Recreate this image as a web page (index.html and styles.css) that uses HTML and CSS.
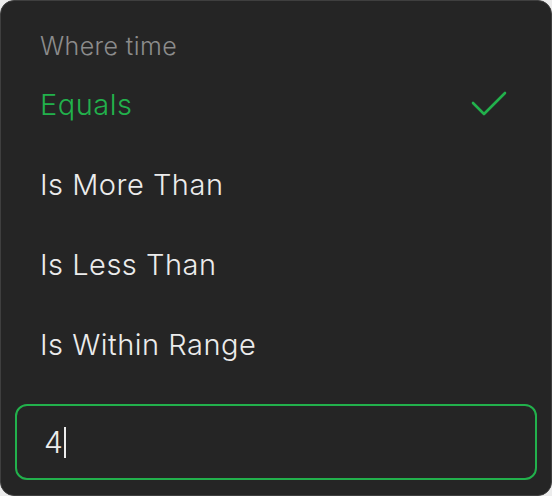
FILE: index.html
```html
<!DOCTYPE html>
<html>
<head>
<meta charset="utf-8">
<link rel="stylesheet" href="styles.css">
</head>
<body>
<div class="card">
  <div class="header">Where time</div>
  <ul class="options">
    <li class="option selected"><span>Equals</span>
      <svg class="check" width="36" height="26" viewBox="0 0 36 26"><path d="M2 12 L13 23 L34 2" fill="none" stroke="#22b14c" stroke-width="2.6" stroke-linecap="round" stroke-linejoin="round"/></svg>
    </li>
    <li class="option"><span>Is More Than</span></li>
    <li class="option"><span>Is Less Than</span></li>
    <li class="option"><span>Is Within Range</span></li>
  </ul>
  <div class="input"><span class="value">4</span><span class="caret"></span></div>
</div>
</body>
</html>
```
FILE: styles.css
```css
html, body { margin: 0; padding: 0; background: #ececec; }
body { width: 552px; height: 496px; font-family: Inter, "Noto Sans", sans-serif; }
.card {
  box-sizing: border-box;
  width: 552px; height: 496px;
  background: #252525;
  border: 1px solid #3f3f3f;
  border-radius: 14px;
  padding: 28px 14px 15px 14px;
  display: flex; flex-direction: column;
}
.header {
  color: #8c8c8c;
  font-size: 25px;
  font-weight: 300;
  letter-spacing: 0.4px;
  line-height: 34px;
  padding-left: 25px;
}
.options { list-style: none; margin: 1px 0 0 0; padding: 0; }
.option {
  height: 80px;
  display: flex; align-items: center; justify-content: space-between;
  padding: 0 30px 0 25px;
  color: #ececec;
  font-size: 29px;
  font-weight: 300;
  letter-spacing: 0.5px;
}
.selected { color: #22b14c; }
.check { display: block; }
.input {
  margin-top: 20px;
  height: 76px;
  box-sizing: border-box;
  border: 2px solid #22b14c;
  border-radius: 12px;
  display: flex; align-items: center;
  padding-left: 27px;
  color: #ececec;
  font-size: 30px;
  font-weight: 300;
}
.caret { display: inline-block; width: 2px; height: 31px; background: #ececec; margin-left: 1px; }
```
